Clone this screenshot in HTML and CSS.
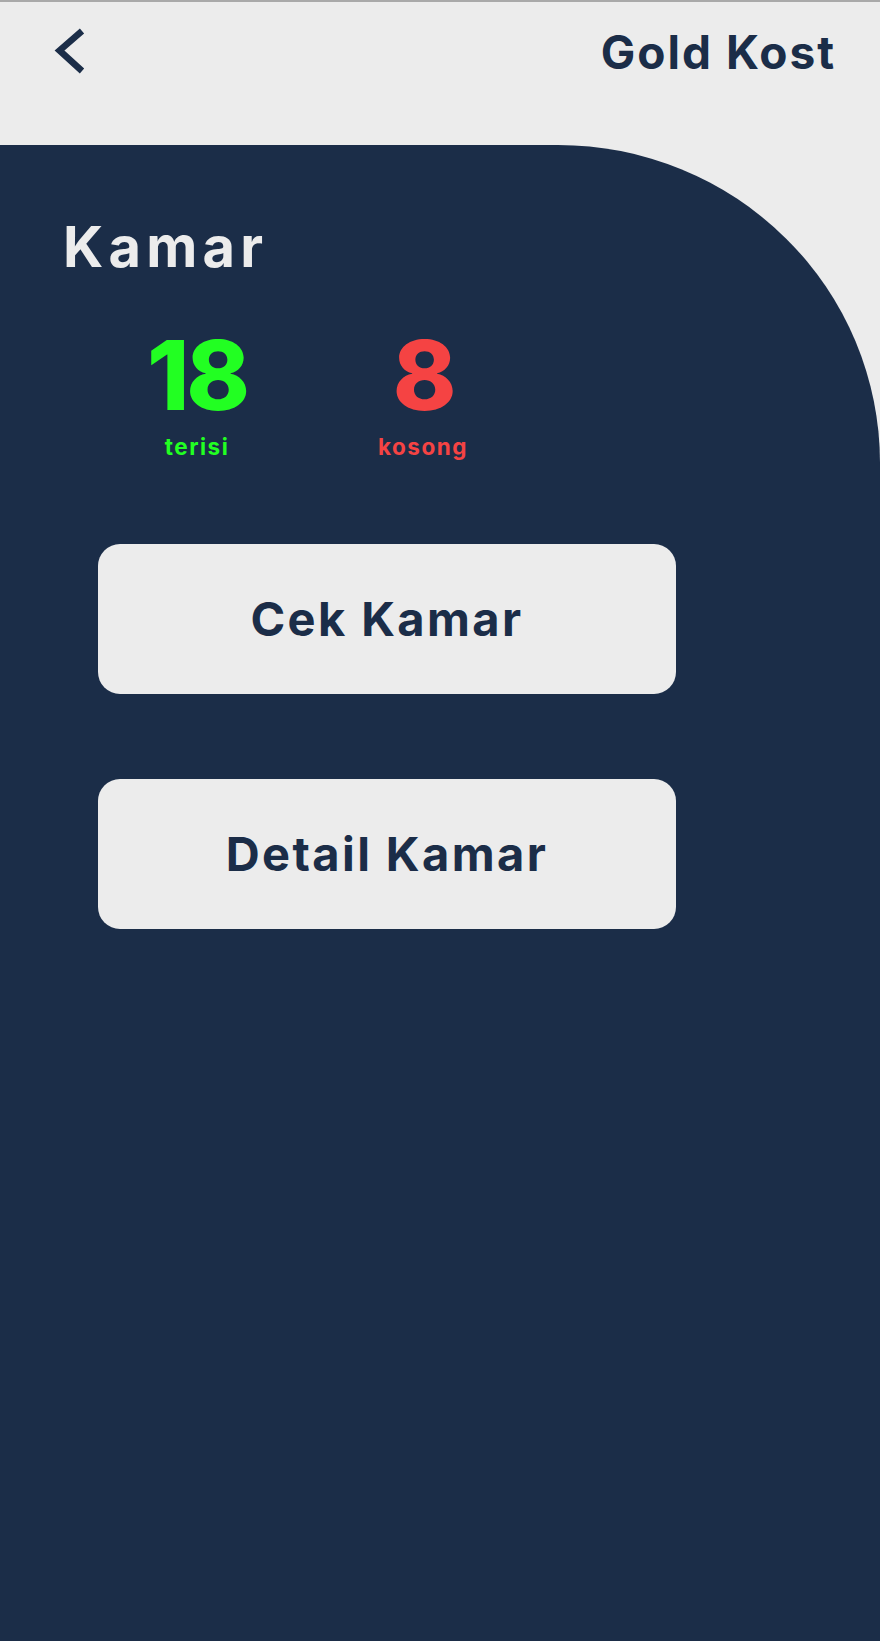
FILE: index.html
```html
<!DOCTYPE html>
<html lang="id">
<head>
<meta charset="utf-8">
<title>Gold Kost - Kamar</title>
<link rel="stylesheet" href="styles.css">
</head>
<body>
<div class="screen">
  <header class="topbar">
    <button class="back" aria-label="Kembali">
      <svg width="40" height="50" viewBox="0 0 40 50">
        <path d="M32 6 L9.5 25.5 L32 46" fill="none" stroke="#1b2d48" stroke-width="6.5" stroke-linejoin="miter"/>
      </svg>
    </button>
    <h1 class="brand">Gold Kost</h1>
  </header>
  <main class="panel">
    <h2 class="title">Kamar</h2>
    <div class="stats">
      <div class="stat filled">
        <span class="num">18</span>
        <span class="label">terisi</span>
      </div>
      <div class="stat empty">
        <span class="num">8</span>
        <span class="label">kosong</span>
      </div>
    </div>
    <div class="actions">
      <button class="action">Cek Kamar</button>
      <button class="action">Detail Kamar</button>
    </div>
  </main>
</div>
</body>
</html>
```
FILE: styles.css
```css
* { box-sizing: border-box; }
html, body { margin: 0; padding: 0; }
body {
  background: #ececec;
  font-family: Inter, "Open Sans", "Liberation Sans", sans-serif;
  font-weight: 700;
}
.screen {
  display: flex;
  flex-direction: column;
  min-height: 1641px;
}
.topbar {
  height: 145px;
  border-top: 2px solid #a9a9a9;
  display: flex;
  justify-content: space-between;
  align-items: flex-start;
  padding: 23px 44px 0 50px;
}
.back {
  border: 0;
  background: none;
  padding: 0;
  margin: 0;
  width: 40px;
  height: 50px;
  display: block;
}
.back svg { display: block; }
.brand {
  margin: 4px 0 0 0;
  font-size: 46px;
  line-height: 1;
  font-weight: 700;
  color: #1b2d48;
  letter-spacing: 2px;
}
.panel {
  flex: 1;
  background: #1b2d48;
  border-top-right-radius: 322px 318px;
  padding: 74px 0 0 63px;
  display: flex;
  flex-direction: column;
  align-items: flex-start;
}
.title {
  margin: 0;
  font-size: 56px;
  line-height: 1;
  font-weight: 700;
  color: #ececec;
  letter-spacing: 5.2px;
}
.stats {
  display: flex;
  gap: 106px;
  margin: 52px 0 0 74px;
}
.stat {
  width: 120px;
  display: flex;
  flex-direction: column;
  align-items: center;
}
.num {
  font-size: 96px;
  line-height: 1;
  font-weight: 800;
  letter-spacing: -3px;
}
.label {
  margin-top: 13px;
  font-size: 22.5px;
  line-height: 1;
  font-weight: 700;
  letter-spacing: 1.5px;
}
.filled { color: #22ff22; }
.empty { color: #f54343; }
.actions {
  display: flex;
  flex-direction: column;
  gap: 85px;
  margin: 85px 0 0 35px;
}
.action {
  width: 578px;
  height: 150px;
  border: 0;
  border-radius: 22px;
  background: #ececec;
  color: #1b2d48;
  font-family: Inter, "Open Sans", "Liberation Sans", sans-serif;
  font-weight: 700;
  font-size: 47px;
  letter-spacing: 2.4px;
  padding: 0;
  display: flex;
  align-items: center;
  justify-content: center;
}
```
